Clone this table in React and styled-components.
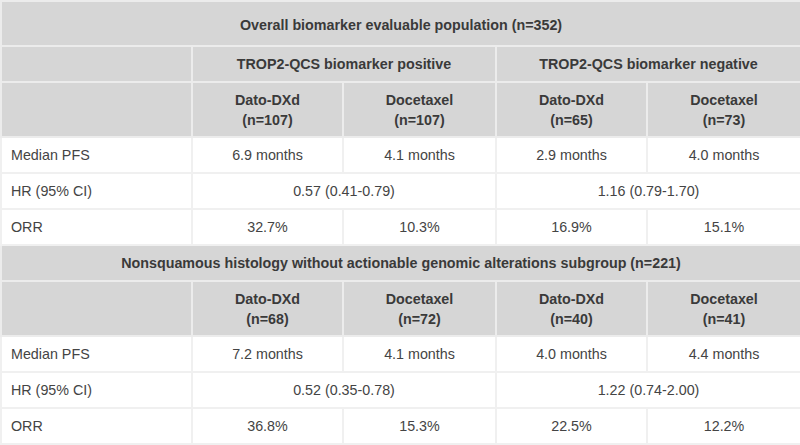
import React from "react";
import styled, { createGlobalStyle } from "styled-components";

const GlobalStyle = createGlobalStyle`
  html, body {
    margin: 0;
    padding: 0;
    background: #ffffff;
  }
`;

const Table = styled.table`
  width: 800px;
  border-collapse: collapse;
  table-layout: fixed;
  font-family: "Liberation Sans", Arial, sans-serif;
  font-size: 14.3px;
  color: #444;
`;

const Row = styled.tr`
  height: ${(p) => p.h || 36}px;
`;

const Head = styled.th`
  background: #d6d6d6;
  color: #3a3a3a;
  font-weight: bold;
  text-align: center;
  line-height: 20px;
  border: 2px solid #ececec;
  padding: ${(p) => (p.top ? "2px 8px 0" : "0 8px")};
`;

const Cell = styled.td`
  background: #fff;
  text-align: ${(p) => (p.label ? "left" : "center")};
  padding: ${(p) => (p.label ? "0 9px" : "0 8px")};
  border: 2px solid #f0f0f0;
`;

const Section = ({ title, groups, arms, rows }) => (
  <>
    <Row h={title.first ? 45 : 36}>
      <Head colSpan={5} top={title.first}>
        {title.text}
      </Head>
    </Row>
    {groups && (
      <Row h={36}>
        <Head />
        <Head colSpan={2}>{groups[0]}</Head>
        <Head colSpan={2}>{groups[1]}</Head>
      </Row>
    )}
    <Row h={55}>
      <Head />
      {arms.map((a, i) => (
        <Head key={i}>
          {a.name}
          <br />
          (n={a.n})
        </Head>
      ))}
    </Row>
    <Row h={36}>
      <Cell label>Median PFS</Cell>
      {rows.pfs.map((v, i) => (
        <Cell key={i}>{v}</Cell>
      ))}
    </Row>
    <Row h={36}>
      <Cell label>HR (95% CI)</Cell>
      <Cell colSpan={2}>{rows.hr[0]}</Cell>
      <Cell colSpan={2}>{rows.hr[1]}</Cell>
    </Row>
    <Row h={36}>
      <Cell label>ORR</Cell>
      {rows.orr.map((v, i) => (
        <Cell key={i}>{v}</Cell>
      ))}
    </Row>
  </>
);

export default function App() {
  return (
    <>
      <GlobalStyle />
      <Table>
        <colgroup>
          <col style={{ width: 191 }} />
          <col style={{ width: 151 }} />
          <col style={{ width: 153 }} />
          <col style={{ width: 151 }} />
          <col style={{ width: 154 }} />
        </colgroup>
        <tbody>
          <Section
            title={{ text: "Overall biomarker evaluable population (n=352)", first: true }}
            groups={["TROP2-QCS biomarker positive", "TROP2-QCS biomarker negative"]}
            arms={[
              { name: "Dato-DXd", n: 107 },
              { name: "Docetaxel", n: 107 },
              { name: "Dato-DXd", n: 65 },
              { name: "Docetaxel", n: 73 },
            ]}
            rows={{
              pfs: ["6.9 months", "4.1 months", "2.9 months", "4.0 months"],
              hr: ["0.57 (0.41-0.79)", "1.16 (0.79-1.70)"],
              orr: ["32.7%", "10.3%", "16.9%", "15.1%"],
            }}
          />
          <Section
            title={{
              text: "Nonsquamous histology without actionable genomic alterations subgroup (n=221)",
            }}
            arms={[
              { name: "Dato-DXd", n: 68 },
              { name: "Docetaxel", n: 72 },
              { name: "Dato-DXd", n: 40 },
              { name: "Docetaxel", n: 41 },
            ]}
            rows={{
              pfs: ["7.2 months", "4.1 months", "4.0 months", "4.4 months"],
              hr: ["0.52 (0.35-0.78)", "1.22 (0.74-2.00)"],
              orr: ["36.8%", "15.3%", "22.5%", "12.2%"],
            }}
          />
        </tbody>
      </Table>
    </>
  );
}
